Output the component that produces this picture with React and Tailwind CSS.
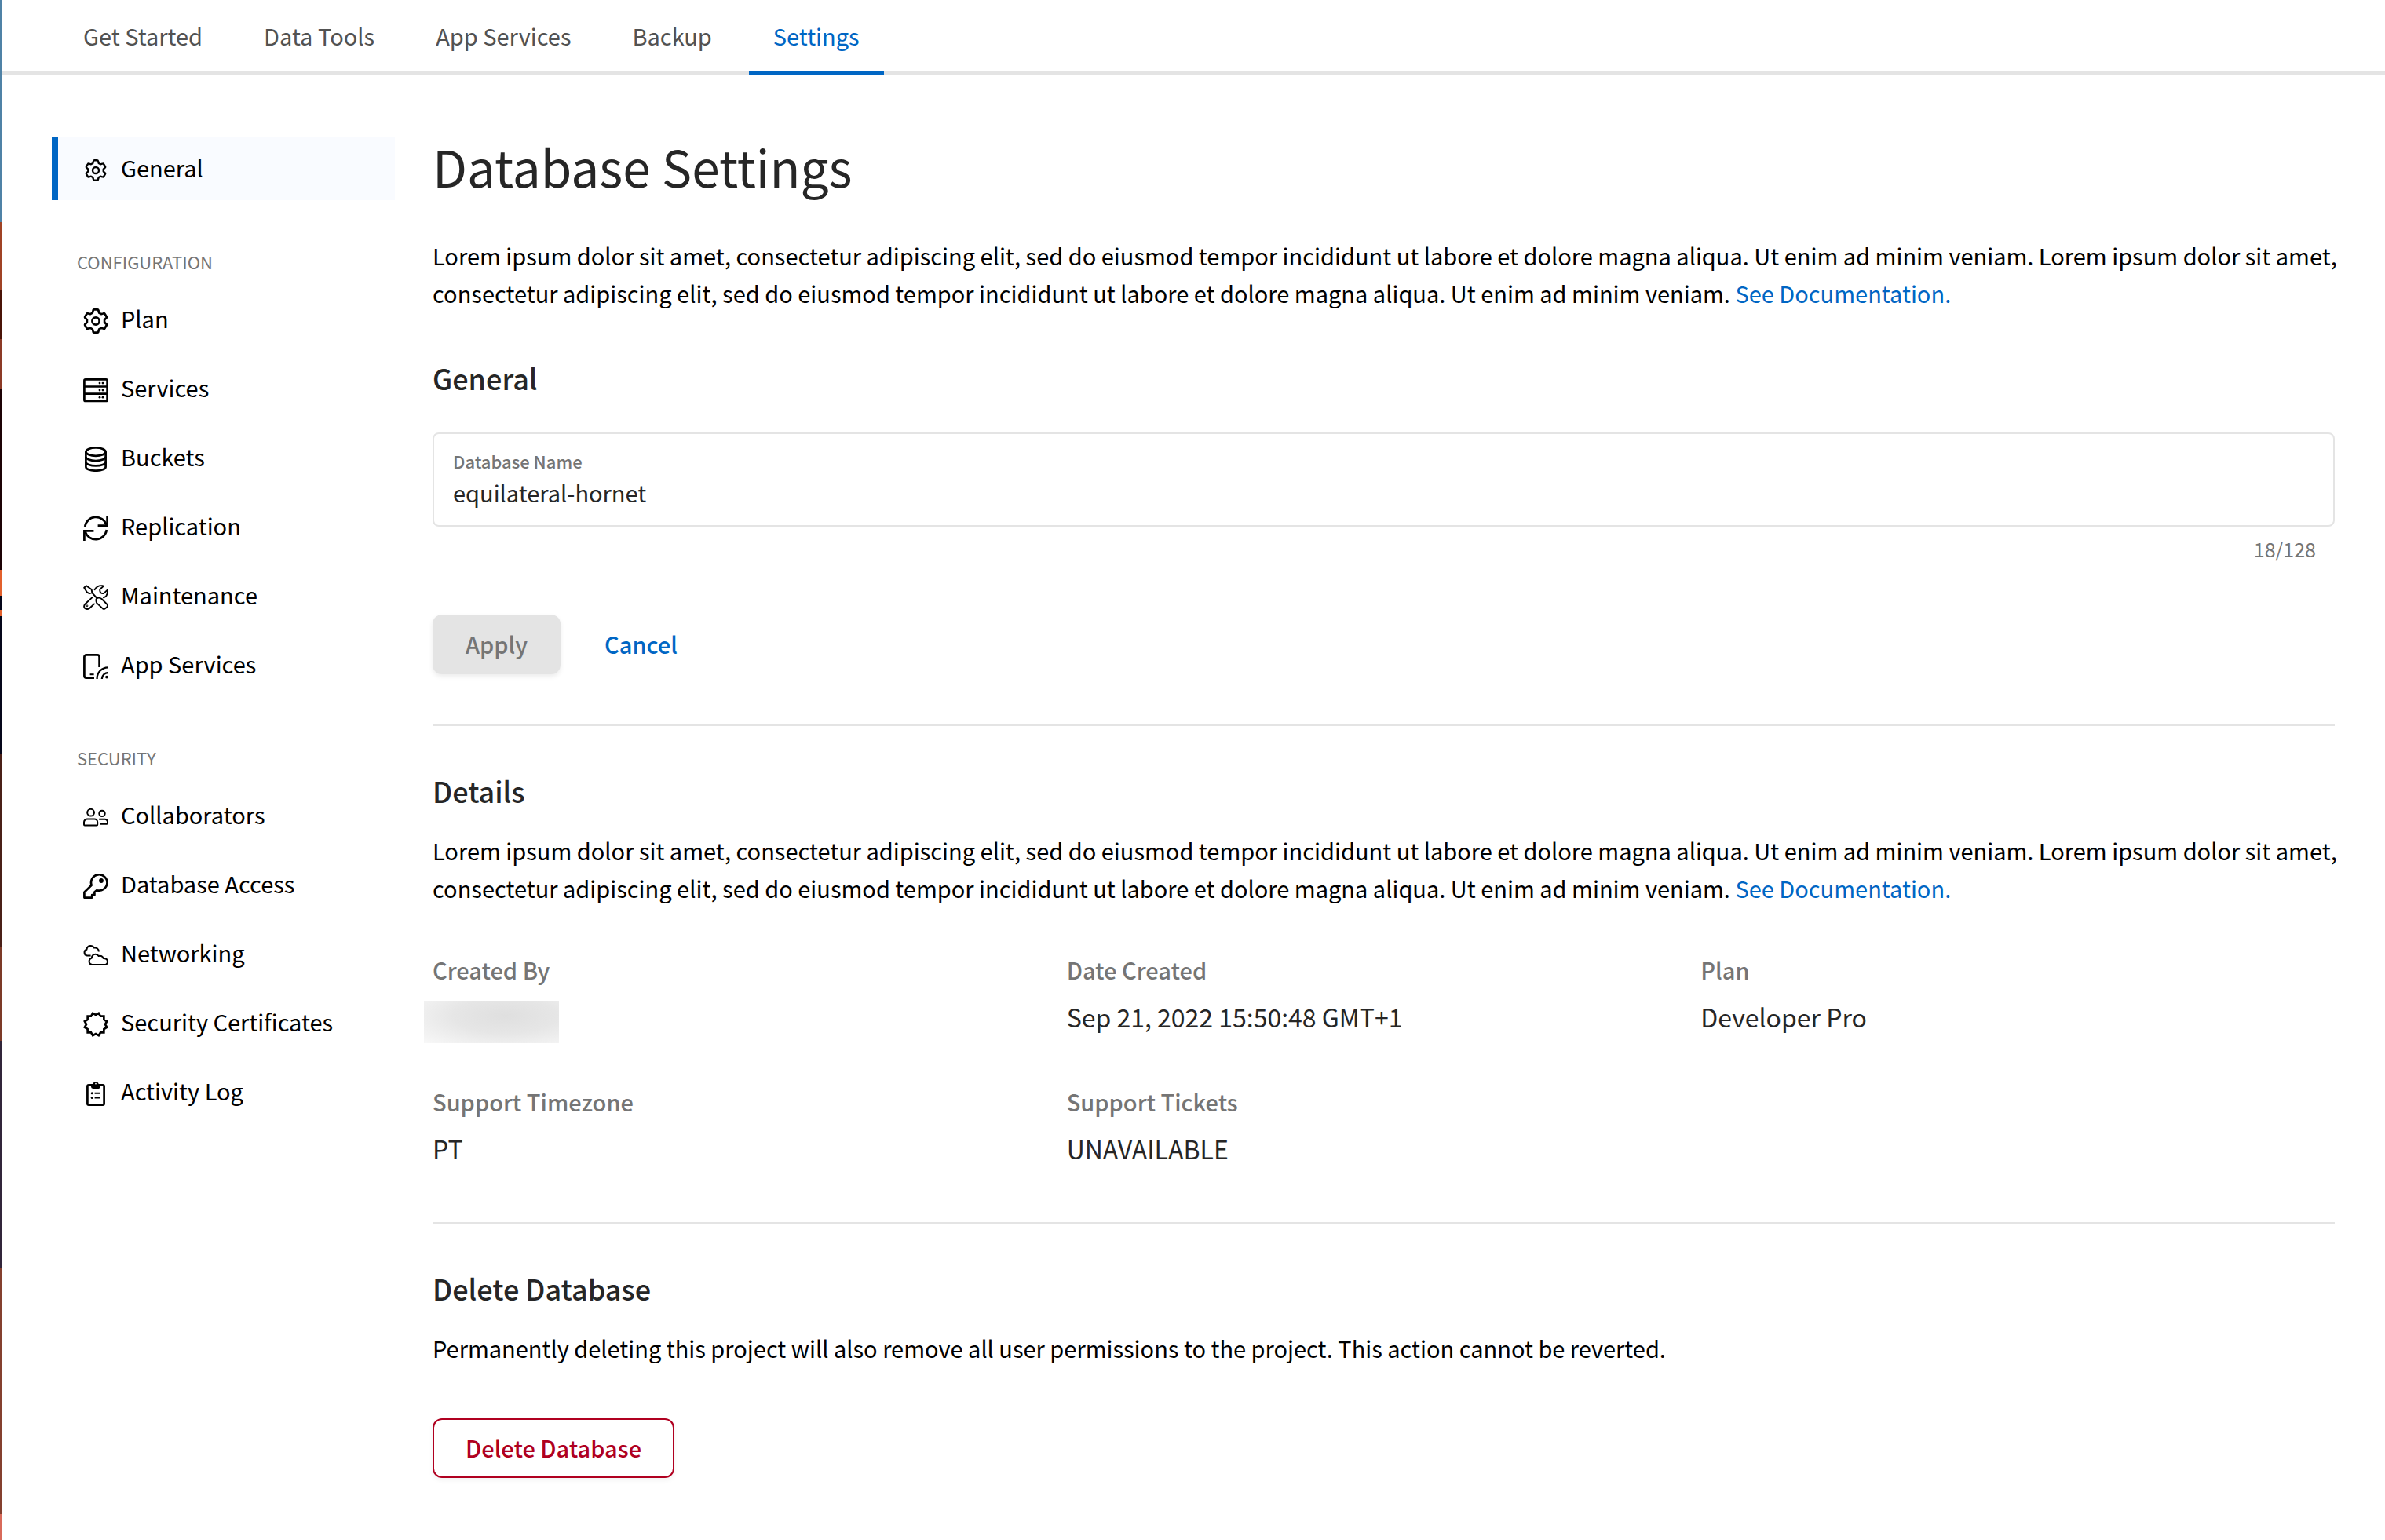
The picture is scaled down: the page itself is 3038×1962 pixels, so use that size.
import React, { useState } from "react";

const polar = (r, deg) => {
  const a = (deg * Math.PI) / 180;
  return `${(16 + r * Math.cos(a)).toFixed(2)} ${(16 + r * Math.sin(a)).toFixed(2)}`;
};

const gearPath =
  "M" +
  [0, 1, 2, 3, 4, 5]
    .map((k) => {
      const a = -90 + 60 * k;
      return `${polar(11.2, a - 22)}L${polar(13.4, a - 15)}Q${polar(15, a - 13)} ${polar(14.7, a - 8)}L${polar(14.7, a + 8)}Q${polar(15, a + 13)} ${polar(13.4, a + 15)}L${polar(11.2, a + 22)}`;
    })
    .join("L") +
  "Z";

const burstPath =
  "M" +
  Array.from({ length: 12 }, (_, k) => [polar(14.6, 15 + 30 * k), polar(12, 30 + 30 * k)].join("L")).join("L") +
  "Z";

function Icon({ children, className = "size-8", width = "2.7" }) {
  return (
    <svg
      viewBox="0 0 32 32"
      className={className}
      fill="none"
      stroke="currentColor"
      strokeWidth={width}
      aria-hidden="true"
    >
      {children}
    </svg>
  );
}

const Gear = ({ className }) => (
  <Icon className={className}>
    <path d={gearPath} strokeLinejoin="round" />
    <circle cx="16" cy="16" r="4.6" />
  </Icon>
);

const Server = () => (
  <Icon>
    <rect x="1.4" y="2.4" width="29.2" height="27.6" rx="1.5" />
    <path d="M1.4 11.5H30.6M1.4 20.6H30.6" />
    <g fill="currentColor" stroke="none">
      <circle cx="21" cy="7.1" r="1.4" />
      <circle cx="25" cy="7.1" r="1.4" />
      <circle cx="21" cy="16" r="1.4" />
      <circle cx="25" cy="16" r="1.4" />
      <circle cx="21" cy="25.2" r="1.4" />
      <circle cx="25" cy="25.2" r="1.4" />
    </g>
  </Icon>
);

const Cylinder = () => (
  <Icon>
    <ellipse cx="16" cy="6.6" rx="12.6" ry="5.2" />
    <path d="M3.4 6.6V26c0 2.6 5.6 4.7 12.6 4.7s12.6-2.1 12.6-4.7V6.6" />
    <path d="M3.4 13c0 2.8 5.6 5 12.6 5s12.6-2.2 12.6-5M3.4 19.4c0 2.8 5.6 5 12.6 5s12.6-2.2 12.6-5" />
  </Icon>
);

const Cycle = () => (
  <Icon>
    <path d="M2.2 14A14 14 0 0 1 29.4 11.6" />
    <path d="M30.6 0V12.6H18.6" />
    <path d="M29.8 18A14 14 0 0 1 2.6 20.4" />
    <path d="M1.4 32V19.4H13.4" />
  </Icon>
);

const Tools = () => (
  <Icon width="1.9">
    <g strokeLinejoin="round" strokeLinecap="round">
      <path d="M1.2 3.8L4 1.2L10.6 6L11.4 10.2L8 11.2L4.8 9.6Z" />
      <path d="M11.2 10.2L17.4 17" />
      <path d="M16.6 18.2Q18.2 16 20.8 16.6L23.6 18L30.6 25.2Q31.4 26.8 30.4 28.2L27.6 30.6Q26 31.2 25 30.4L17.4 23.4Q16 21 16.6 18.2Z" />
      <path d="M14.6 6.2Q17.6 0.6 24.4 1.2L26 1.6L21.4 5.8Q20.8 8.4 22.4 10.2Q24.4 11.6 26.6 10.6L30.8 6.6Q31.6 11 29.4 14Q28 15.8 26 16.2" />
      <path d="M11.2 16.4L2.2 24.8Q0 28 2.2 30Q5 32 8 30L14 24.4" />
      <circle cx="5" cy="26.8" r="0.4" />
    </g>
  </Icon>
);

const PhoneSignal = () => (
  <Icon>
    <path d="M14 30.6H4A2.6 2.6 0 0 1 1.4 28V4A2.6 2.6 0 0 1 4 1.4H18A2.6 2.6 0 0 1 20.6 4V17" />
    <path d="M8.6 26.2H13.6" strokeWidth="2" />
    <path d="M17.6 32A14 14 0 0 1 32 17.4M23.8 32A8 8 0 0 1 32 24" strokeWidth="2.3" />
    <circle cx="30" cy="29.6" r="1.9" fill="currentColor" stroke="none" />
  </Icon>
);

const People = () => (
  <Icon width="2">
    <circle cx="9.6" cy="10.2" r="4.4" />
    <path d="M1 25.4V22.6A4 4 0 0 1 5 18.6H14.2A4 4 0 0 1 18.2 22.6V25.4Q18.2 26.4 17.2 26.4H2Q1 26.4 1 25.4Z" />
    <circle cx="24" cy="11.4" r="3.7" />
    <path d="M20.2 18.8H27.6A3.4 3.4 0 0 1 31 22.2V23.8Q31 24.8 30 24.8H21" />
  </Icon>
);

const Key = () => (
  <Icon>
    <path d="M10.6 14.8A10.2 10.2 0 1 1 17.2 21.2L14.4 23.6V27.2H11.2V30.6H1.4V23.8Z" strokeLinejoin="round" />
    <circle cx="23" cy="9" r="2.9" fill="currentColor" stroke="none" />
  </Icon>
);

const Clouds = () => (
  <Icon width="2">
    <g strokeLinejoin="round">
      <path d="M11.2 28A4.3 4.3 0 0 1 10.8 19.6C11 16.6 13.2 14.8 15.6 14.8C17.4 14.8 18.8 15.6 19.6 17C22.4 16 25 17.4 25.6 20C28.8 20 31 21.6 31 24.2C31 26.6 29.2 28 27 28Z" />
      <path d="M9.6 16.6H5A4 4 0 0 1 4.4 8.8C4.8 5.8 6.8 4 9.4 4C11.6 4 13 5 13.8 6.6C17.2 6 19.8 7.8 19.8 11.4" />
    </g>
  </Icon>
);

const Burst = () => (
  <Icon width="2.7">
    <path d={burstPath} />
  </Icon>
);

const Clipboard = () => (
  <Icon>
    <rect x="5.4" y="5.4" width="21.2" height="25.2" rx="1.6" />
    <path d="M10 4H12.4A3.7 3.7 0 0 1 19.6 4H22V7.6Q22 10 19.6 10H12.4Q10 10 10 7.6Z" fill="currentColor" stroke="none" />
    <circle cx="16" cy="3.6" r="0.9" fill="#ffffff" stroke="none" />
    <path d="M14.6 15.8H21.8M14.6 21.6H21.8" strokeWidth="1.9" />
    <g fill="currentColor" stroke="none">
      <circle cx="11.2" cy="15.8" r="1.5" />
      <circle cx="11.2" cy="21.6" r="1.5" />
    </g>
  </Icon>
);

const tabs = ["Get Started", "Data Tools", "App Services", "Backup", "Settings"];

const sections = [
  {
    title: "Configuration",
    items: [
      ["Plan", Gear],
      ["Services", Server],
      ["Buckets", Cylinder],
      ["Replication", Cycle],
      ["Maintenance", Tools],
      ["App Services", PhoneSignal],
    ],
  },
  {
    title: "Security",
    items: [
      ["Collaborators", People],
      ["Database Access", Key],
      ["Networking", Clouds],
      ["Security Certificates", Burst],
      ["Activity Log", Clipboard],
    ],
  },
];

function SideLink({ label, icon: Glyph, active }) {
  return (
    <a
      href="#"
      aria-current={active ? "page" : undefined}
      className={
        active
          ? "flex h-20 items-center gap-4 border-l-8 border-[#0066c4] bg-[#f9fbff] pl-8"
          : "flex h-20 items-center gap-4 border-l-8 border-transparent pl-8"
      }
    >
      <span className="flex w-8 justify-center pt-1">
        <Glyph className={active ? "size-7" : undefined} />
      </span>
      <span className="pb-1 leading-10">{label}</span>
    </a>
  );
}

function Intro() {
  return (
    <p className="-mr-2 leading-[48px]">
      Lorem ipsum dolor sit amet, consectetur adipiscing elit, sed do eiusmod tempor incididunt ut labore et dolore
      magna aliqua. Ut enim ad minim veniam. Lorem ipsum dolor sit amet, consectetur adipiscing elit, sed do eiusmod
      tempor incididunt ut labore et dolore magna aliqua. Ut enim ad minim veniam.{" "}
      <a href="#" className="text-[#0066c4]">
        See Documentation.
      </a>
    </p>
  );
}

function Detail({ label, children }) {
  return (
    <div>
      <dt className="font-medium leading-10 text-[#757575]">{label}</dt>
      <dd className="mt-5 h-10 text-[32px] leading-10 text-[#262626]">{children}</dd>
    </div>
  );
}

export default function App() {
  const [name, setName] = useState("equilateral-hornet");

  return (
    <div className="flex min-h-screen bg-white font-['Noto_Sans_CJK_SC','Noto_Sans',sans-serif] text-[29px] text-black">
      <div className="w-[2px] shrink-0 bg-[linear-gradient(#4f82a6_0_14.4%,#a04325_14.4%_18.8%,#4a1408_18.8%_22%,#8c3a26_22%_25.3%,#1c0205_25.3%_37%,#e2602c_37%_38.7%,#05061a_38.7%_39.6%,#e2602c_39.6%_40%,#05061a_40%_49%,#4a2018_49%_61.5%,#7c3a28_61.5%_67.6%,#31253a_67.6%_82.3%,#84402f_82.3%_98.3%,#d86a5a_98.3%)]" />
      <div className="min-w-0 flex-1">
        <nav className="flex h-[95px] gap-4 border-b-4 border-[#e4e4e4] pl-[73px]">
          {tabs.map((tab) => (
            <a
              key={tab}
              href="#"
              className={
                tab === "Settings"
                  ? "-mb-1 flex items-center border-b-4 border-[#0066c4] px-[31px] text-[#0066c4]"
                  : "-mb-1 flex items-center border-b-4 border-transparent px-[31px] text-[#525252]"
              }
            >
              {tab}
            </a>
          ))}
        </nav>

        <div className="flex gap-12 px-16 pt-20">
          <aside className="w-[437px] shrink-0">
            <SideLink label="General" icon={Gear} active />
            {sections.map((section) => (
              <section key={section.title} className="mt-[62px]">
                <h2 className="pl-8 text-[22px] leading-8 text-[#757575] uppercase">{section.title}</h2>
                <div className="mt-[18px] flex flex-col gap-2">
                  {section.items.map(([label, icon]) => (
                    <SideLink key={label} label={label} icon={icon} />
                  ))}
                </div>
              </section>
            ))}
          </aside>

          <main className="min-w-0 flex-1">
            <h1 className="mb-[54px] text-[64px] leading-[72px] text-[#262626]">Database Settings</h1>
            <Intro />

            <section className="mt-[60px] border-b-2 border-[#e4e4e4] pb-16">
              <h2 className="text-[36px] leading-[48px] font-medium text-[#262626]">General</h2>
              <div className="mt-[46px] rounded-lg border-2 border-[#e4e4e4] px-6 py-5">
                <label htmlFor="database-name" className="block text-[22px] leading-7 font-medium text-[#757575]">
                  Database Name
                </label>
                <input
                  id="database-name"
                  value={name}
                  maxLength={128}
                  onChange={(event) => setName(event.target.value)}
                  className="mt-1 block h-11 w-full leading-[44px] text-[#262626] outline-none"
                />
              </div>
              <p className="mt-3 pr-6 text-right text-[25px] leading-8 text-[#757575]">{name.length}/128</p>
              <div className="mt-[68px] flex gap-4">
                <button
                  type="button"
                  disabled
                  className="h-[76px] rounded-xl border-2 border-[#e4e4e4] bg-[#e4e4e4] px-10 font-medium text-[#757575] shadow-[0_3px_6px_rgba(0,0,0,0.08)]"
                >
                  Apply
                </button>
                <button type="button" className="h-[76px] rounded-xl px-10 font-medium text-[#0066c4]">
                  Cancel
                </button>
              </div>
            </section>

            <section className="mt-[58px] border-b-2 border-[#e4e4e4] pb-[74px]">
              <h2 className="mb-7 text-[36px] leading-[48px] font-medium text-[#262626]">Details</h2>
              <Intro />
              <dl className="mt-[60px] grid grid-cols-3 gap-y-[68px]">
                <Detail label="Created By">
                  <span className="-ml-[11px] block h-[54px] w-[172px] bg-[radial-gradient(ellipse_at_60%_35%,#dfdfdf,#e6e6e6_45%,#f8f8f8)]" />
                </Detail>
                <Detail label="Date Created">Sep 21, 2022 15:50:48 GMT+1</Detail>
                <Detail label="Plan">Developer Pro</Detail>
                <Detail label="Support Timezone">PT</Detail>
                <Detail label="Support Tickets">UNAVAILABLE</Detail>
              </dl>
            </section>

            <section className="mt-[58px] pb-[78px]">
              <h2 className="mb-7 text-[36px] leading-[48px] font-medium text-[#262626]">Delete Database</h2>
              <p className="leading-[48px]">
                Permanently deleting this project will also remove all user permissions to the project. This action
                cannot be reverted.
              </p>
              <button
                type="button"
                className="mt-[66px] h-[76px] rounded-xl border-2 border-[#b00020] px-10 font-medium text-[#b00020] shadow-[0_3px_6px_rgba(0,0,0,0.05)]"
              >
                Delete Database
              </button>
            </section>
          </main>
        </div>
      </div>
    </div>
  );
}
